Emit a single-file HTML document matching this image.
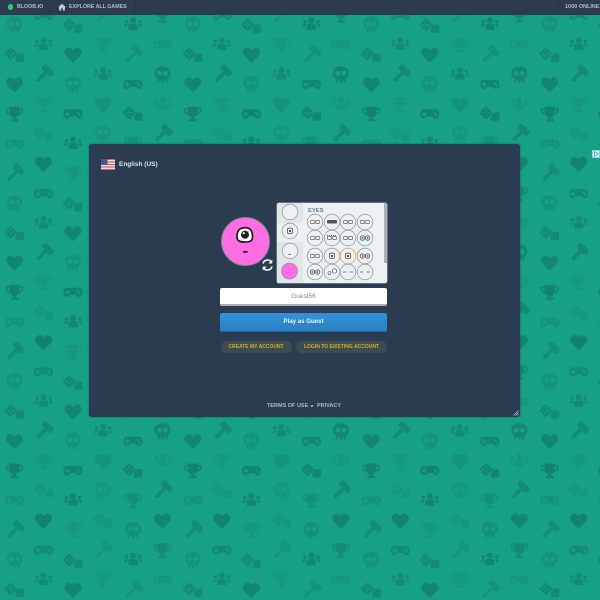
<!DOCTYPE html>
<html><head><meta charset="utf-8"><style>
*{box-sizing:border-box}
html,body{margin:0;padding:0;width:600px;height:600px;overflow:hidden;background:#16a085;font-family:"Liberation Sans",sans-serif}
.bg{position:absolute;left:0;top:0}
.abs{position:absolute}
.t{position:absolute;white-space:nowrap;font-weight:bold}
</style></head><body>
<svg class="bg" width="600" height="600">
<defs>
<g id="skull" transform="scale(.76)"><path fill-rule="evenodd" d="M0-11C-6.500-11-10.500-7-10.500-2C-10.500 1.500-9 3.500-6.500 5V10.500H-4.200V7.500H-1.500V10.500H1.500V7.500H4.200V10.500H6.500V5C9 3.500 10.500 1.500 10.500-2C10.500-7 6.500-11 0-11ZM-4-5A3.200 3.200 0 1 1-4 1.400A3.200 3.200 0 1 1-4-5ZM4-5A3.200 3.200 0 1 1 4 1.400A3.200 3.200 0 1 1 4-5Z"/></g>
<g id="heart" transform="scale(.76)"><path d="M0 10.500L-9.500 1C-13-3-10.500-9.500-5.500-9.500C-3-9.500-1-8 0-6C1-8 3-9.500 5.500-9.500C10.500-9.500 13-3 9.500 1Z"/></g>
<g id="trophy" transform="scale(.7)"><path fill-rule="evenodd" d="M-7.500-10.500H7.500V-8.500H12.500V-5C12.500-1.500 9.500 1 6 1.500C5 3.500 3.500 4.500 1.800 5V7.500H5.500V10.500H-5.500V7.500H-1.800V5C-3.500 4.500-5 3.500-6 1.500C-9.500 1-12.500-1.500-12.500-5V-8.500H-7.500ZM-10.500-6.500V-5C-10.500-3-9-1.500-7-1L-7.500-6.500ZM10.500-6.500H7.500L7-1C9-1.500 10.500-3 10.500-5Z"/></g>
<g id="gamepad" transform="scale(.66)"><path fill-rule="evenodd" d="M-9-7H9C13-7 14.500-3.500 14.500 0C14.500 3.500 13 7 9 7C6.500 7 5.500 4.500 4 3.500H-4C-5.500 4.500-6.500 7-9 7C-13 7-14.500 3.500-14.500 0C-14.500-3.500-13-7-9-7ZM-9.500-3.600V-1.200H-11.900V1.200H-9.500V3.600H-7.300V1.200H-4.900V-1.200H-7.300V-3.600ZM7.500-3.500A1.700 1.700 0 1 0 7.500-.1A1.700 1.700 0 1 0 7.500-3.500ZM10 0A1.700 1.700 0 1 0 10 3.400A1.700 1.700 0 1 0 10 0Z"/></g>
<g id="dice" transform="scale(.62)"><path fill-rule="evenodd" d="M-6.500-12L2.500-3.500C3.300-2.700 3.300-1.300 2.500-.5L-5.500 7.500C-6.300 8.300-7.700 8.300-8.500 7.500L-16.500-.5C-17.300-1.300-17.300-2.700-16.500-3.500L-8.500-11.500C-8-12-7-12.500-6.500-12ZM-7-8.500A1.400 1.400 0 1 0-7-5.700A1.400 1.400 0 1 0-7-8.500ZM-11.500-3.500A1.400 1.400 0 1 0-11.500-.7A1.400 1.400 0 1 0-11.500-3.500ZM-7-3.500A1.400 1.400 0 1 0-7-.7A1.400 1.400 0 1 0-7-3.500ZM-2.500-3.500A1.400 1.400 0 1 0-2.500-.7A1.400 1.400 0 1 0-2.500-3.500ZM-7 1A1.400 1.400 0 1 0-7 3.800A1.400 1.400 0 1 0-7 1Z"/><path d="M5-2.500H12.500C13.500-2.500 14.500-1.500 14.500-.5V9C14.500 10 13.500 11 12.500 11H3C2 11 1 10 1 9V3.500Z"/></g>
<g id="hammer" transform="scale(.66) rotate(45)"><rect x="-2.700" y="-6" width="5.400" height="20" rx="2.200"/><path d="M-8-14H8L10-11.500V-7L8-4.500H-8L-10-7V-11.500Z"/></g>
<g id="people" transform="scale(.66)"><circle cx="0" cy="-7" r="4.600"/><circle cx="-10" cy="-5" r="2.700"/><circle cx="10" cy="-5" r="2.700"/><path d="M-7 7.500V2C-7-.5-5-2-3-2H3C5-2 7-.5 7 2V7.500Z"/><path d="M-14 2.500C-14-.5-12-1.500-10-1.500L-8-1.500C-9-.5-9 1-9 2.500H-14ZM14 2.500C14-.5 12-1.500 10-1.500L8-1.500C9-.5 9 1 9 2.500H14Z"/></g>
<pattern id="p" x="0" y="10" width="178.4" height="178.4" patternUnits="userSpaceOnUse">
<g fill="#000" opacity=".8">
<use href="#skull" transform="translate(14.500 15)" opacity=".1"/>
<use href="#dice" transform="translate(15 45)" opacity=".17"/>
<use href="#heart" transform="translate(14.500 74.500)" opacity=".2"/>
<use href="#trophy" transform="translate(14.500 104)" opacity=".22"/>
<use href="#gamepad" transform="translate(14.500 134)" opacity=".1"/>
<use href="#hammer" transform="translate(14.500 163.700)" opacity=".14"/>
<use href="#people" transform="translate(43.500 35)" opacity=".16"/>
<use href="#hammer" transform="translate(43.500 64.700)" opacity=".17"/>
<use href="#trophy" transform="translate(43.500 94.500)" opacity=".06"/>
<use href="#dice" transform="translate(44 124)" opacity=".07"/>
<use href="#heart" transform="translate(43.500 154)" opacity=".22"/>
<use href="#gamepad" transform="translate(43.500 5.300)" opacity=".17"/>
<use href="#gamepad" transform="translate(43.500 183.700)" opacity=".17"/>
<use href="#dice" transform="translate(73.500 16)" opacity=".17"/>
<use href="#heart" transform="translate(73 45)" opacity=".2"/>
<use href="#skull" transform="translate(73 74.500)" opacity=".1"/>
<use href="#gamepad" transform="translate(73 104)" opacity=".22"/>
<use href="#people" transform="translate(73 134)" opacity=".2"/>
<use href="#trophy" transform="translate(73 163.700)" opacity=".08"/>
<use href="#trophy" transform="translate(103 35)" opacity=".06"/>
<use href="#people" transform="translate(103 64.700)" opacity=".16"/>
<use href="#heart" transform="translate(103 94.500)" opacity=".1"/>
<use href="#skull" transform="translate(103 124)" opacity=".08"/>
<use href="#dice" transform="translate(103.500 154)" opacity=".08"/>
<use href="#hammer" transform="translate(103 5.300)" opacity=".08"/>
<use href="#hammer" transform="translate(103 183.700)" opacity=".08"/>
<use href="#people" transform="translate(133 15)" opacity=".2"/>
<use href="#hammer" transform="translate(133 45)" opacity=".1"/>
<use href="#gamepad" transform="translate(133 74.500)" opacity=".2"/>
<use href="#dice" transform="translate(133.500 104)" opacity=".2"/>
<use href="#trophy" transform="translate(133 134)" opacity=".12"/>
<use href="#skull" transform="translate(133 163.700)" opacity=".12"/>
<use href="#gamepad" transform="translate(162.500 35)" opacity=".07"/>
<use href="#skull" transform="translate(162.500 64.700)" opacity=".2"/>
<use href="#people" transform="translate(162.500 94.500)" opacity=".07"/>
<use href="#hammer" transform="translate(162.500 124)" opacity=".16"/>
<use href="#heart" transform="translate(162.500 154)" opacity=".2"/>
<use href="#trophy" transform="translate(162.500 5.300)" opacity=".16"/>
<use href="#trophy" transform="translate(162.500 183.700)" opacity=".16"/>
</g>
</pattern>
</defs>
<rect width="600" height="600" fill="#16a085"/>
<rect width="600" height="600" fill="url(#p)"/>
</svg>

<!-- top bar -->
<div class="abs" style="left:0;top:0;width:600px;height:15px;background:#2c3b50"></div>
<div class="abs" style="left:50px;top:0;width:1px;height:15px;background:#283648"></div>
<div class="abs" style="left:135px;top:0;width:1px;height:15px;background:#283648"></div>
<div class="abs" style="left:558px;top:0;width:1px;height:15px;background:#283648"></div>
<div class="abs" style="left:7.500px;top:4px;width:5px;height:5.500px;border-radius:50%;background:#2ecc71"></div>
<div class="t" style="left:17px;top:3px;font-size:5.300px;line-height:8px;color:#b4bcc6">BLOOB.IO</div>
<svg class="abs" style="left:58px;top:3px" width="8" height="8" viewBox="0 0 8 8"><path d="M4 .8L8 4.200H6.900V7.500H4.800V5.300H3.200V7.500H1.100V4.200H0Z" fill="#c2c8d0"/></svg>
<div class="t" style="left:69px;top:3px;font-size:5.300px;line-height:8px;color:#b4bcc6">EXPLORE ALL GAMES</div>
<div class="t" style="left:565px;top:3px;font-size:5.500px;line-height:8px;color:#b4bcc6">1000 ONLINE</div>

<!-- ad marker -->
<div class="abs" style="left:592px;top:150px;width:8px;height:8px;background:#f4fdff;border:1px solid #7fd5e6"></div>
<svg class="abs" style="left:594px;top:151px" width="6" height="6" viewBox="0 0 6 6"><path d="M.5.500L4.500 3L.5 5.500Z" fill="none" stroke="#38b4d2" stroke-width=".9"/></svg>

<!-- panel -->
<div class="abs" style="left:88.500px;top:144px;width:431px;height:272.500px;background:#2c3c50;border-radius:3px;box-shadow:0 0 2px rgba(0,0,0,.35)"></div>
<svg class="abs" style="left:513px;top:410px" width="6" height="6" viewBox="0 0 6 6"><path d="M5.500 .5L.5 5.500M5.500 2.500L2.500 5.500M5.500 4.500L4.500 5.500" stroke="#aab4bd" stroke-width=".8"/></svg>

<!-- flag -->
<svg class="abs" style="left:101px;top:159px" width="14" height="11" viewBox="0 0 14 11">
<rect width="14" height="11" fill="#f2e6e8"/>
<rect y="0" width="14" height="1.100" fill="#c9616a"/><rect y="2.400" width="14" height="1.200" fill="#c9616a"/><rect y="4.900" width="14" height="1.200" fill="#c9616a"/><rect y="7.400" width="14" height="1.200" fill="#c9616a"/><rect y="9.900" width="14" height="1.100" fill="#c9616a"/>
<rect width="6.500" height="5.800" fill="#46588e"/></svg>
<div class="t" style="left:119px;top:160.500px;font-size:6.500px;line-height:8px;color:#dfe3e8">English (US)</div>

<!-- avatar -->
<svg class="abs" style="left:220px;top:216px" width="54" height="60" viewBox="0 0 54 60">
<circle cx="25.500" cy="25.500" r="24" fill="#ff6de2" stroke="#7b8790" stroke-width="1"/>
<path d="M17 21C17 14 20 11.700 25 11.700C30 11.700 32.500 14 32.500 21C32.500 25 30 26 25 26C20 26 17 25 17 21Z" fill="#fff" stroke="#111" stroke-width="1.600"/>
<circle cx="25" cy="18.700" r="4" fill="#1f1f1f"/><circle cx="23.700" cy="17.200" r="1.100" fill="#fff"/>
<rect x="23" y="35" width="4.500" height="1.700" fill="#222"/>
<g fill="none" stroke="#f1f4f5" stroke-width="1.600"><path d="M43 47.500A4.800 4.800 0 0 1 51.500 46"/><path d="M52 50.500A4.800 4.800 0 0 1 43.500 52"/></g>
<path d="M52.300 43.500V47.500H48.300ZM42.700 54.500V50.500H46.700Z" fill="#f1f4f5"/>
</svg>

<!-- picker -->
<div class="abs" style="left:277px;top:202.500px;width:110px;height:80px;background:#edf0f1;border-radius:2px;overflow:hidden;box-shadow:0 0 0 .5px #9aa5ad">
<div class="abs" style="left:0;top:0;width:26px;height:20px;background:#e1e5e7"></div>
<div class="abs" style="left:0;top:39px;width:26px;height:41px;background:#e1e5e7"></div>
<div class="abs" style="left:107px;top:0;width:3px;height:60px;background:#aab2b8"></div>
</div>
<svg class="abs" style="left:277px;top:202px" width="110" height="81" viewBox="277 202 110 81">
<defs>
<g id="c"><circle r="7.800" fill="#edf0f1" stroke="#8a9dae" stroke-width=".8"/></g>
<g id="e1" opacity=".85"><rect x="-4.500" y="-1.500" width="4" height="3" rx="1" fill="#fff" stroke="#444" stroke-width=".7"/><rect x=".5" y="-1.500" width="4" height="3" rx="1" fill="#fff" stroke="#444" stroke-width=".7"/></g>
<g id="e2" opacity=".85"><circle cx="-2.600" r="2.200" fill="#fff" stroke="#333" stroke-width=".8"/><circle cx="2.600" r="2.200" fill="#fff" stroke="#333" stroke-width=".8"/><circle cx="-2.600" r=".9" fill="#333"/><circle cx="2.600" r=".9" fill="#333"/></g>
<g id="e3" opacity=".85"><path d="M-2.500-2.500C-1-3 1-3 2.500-2.500V2C1 2.500-1 2.500-2.500 2Z" fill="#fff" stroke="#333" stroke-width=".8"/><circle r="1.200" fill="#333"/></g>
</defs>
<use href="#c" x="290" y="212"/>
<use href="#c" x="290" y="231"/><use href="#e3" x="290" y="231"/>
<use href="#c" x="290" y="251"/><rect x="288.500" y="254" width="2" height=".8" fill="#333"/>
<circle cx="289.500" cy="271" r="8" fill="#ff6de2" stroke="#8a9dae" stroke-width=".8"/>

<use href="#c" x="315" y="222"/><use href="#e1" x="315" y="222"/>
<use href="#c" x="332" y="222"/><rect x="327" y="220" width="10" height="3.500" rx="1" fill="#555"/>
<use href="#c" x="348" y="222"/><use href="#e1" x="348" y="222"/>
<use href="#c" x="365" y="222"/><use href="#e1" x="365" y="222"/>

<use href="#c" x="315" y="238"/><use href="#e1" x="315" y="238"/>
<use href="#c" x="332" y="238"/><use href="#e1" x="332" y="238"/><path d="M327 235.500H337" stroke="#333" stroke-width=".8" stroke-dasharray="1 1"/>
<use href="#c" x="348" y="238"/><use href="#e1" x="348" y="238"/>
<use href="#c" x="365" y="238"/><use href="#e2" x="365" y="238"/>

<use href="#c" x="315" y="256"/><use href="#e1" x="315" y="256"/>
<use href="#c" x="332" y="256"/><use href="#e3" x="332" y="256"/>
<circle cx="348" cy="256" r="7.800" fill="#edf0f1" stroke="#e8a566" stroke-width=".9"/><use href="#e3" x="348" y="256"/>
<use href="#c" x="365" y="256"/><use href="#e2" x="365" y="256"/>

<use href="#c" x="315" y="272"/><use href="#e2" x="315" y="272"/>
<use href="#c" x="332" y="272"/><circle cx="329.500" cy="273" r="1.500" fill="#fff" stroke="#444" stroke-width=".6"/><circle cx="334.500" cy="271" r="2.200" fill="#fff" stroke="#444" stroke-width=".7"/>
<use href="#c" x="348" y="272"/><path d="M343 272H346.500M349.500 272H353" stroke="#666" stroke-width=".7"/>
<use href="#c" x="365" y="272"/><path d="M360 272H363.500M366.500 272H370" stroke="#666" stroke-width=".7"/>
</svg>
<div class="t" style="left:308px;top:206.500px;font-size:5.800px;line-height:8px;color:#5f7d9b">EYES</div>

<!-- input -->
<div class="abs" style="left:220px;top:288px;width:167px;height:18px;background:#fff;border-radius:2px;border-bottom:2px solid #aab0b6;text-align:center;font-size:6.500px;line-height:17px;color:#7e8791">Guest56</div>
<!-- play -->
<div class="abs" style="left:220px;top:313px;width:167px;height:19px;background:linear-gradient(#3193da,#2b7fc0);border-radius:2px;border-bottom:1.500px solid #1f6aa5;text-align:center;font-size:6.100px;line-height:18px;color:#eef5fa;font-weight:bold">Play as Guest</div>
<!-- pills -->
<div class="abs" style="left:220.500px;top:341px;width:71px;height:12px;background:#3e4b50;border-radius:6px;text-align:center;font-size:5px;line-height:12px;color:#cdb41f;font-weight:bold">CREATE MY ACCOUNT</div>
<div class="abs" style="left:296px;top:341px;width:91px;height:12px;background:#3e4b50;border-radius:6px;text-align:center;font-size:5px;line-height:12px;color:#cdb41f;font-weight:bold">LOGIN TO EXISTING ACCOUNT</div>
<!-- footer -->
<div class="t" style="left:267px;top:401.500px;font-size:5.500px;line-height:8px;color:#aeb7c3">TERMS OF USE</div>
<div class="abs" style="left:311px;top:405px;width:2px;height:2px;border-radius:50%;background:#c3cad3"></div>
<div class="t" style="left:317px;top:401.500px;font-size:5.500px;line-height:8px;color:#aeb7c3">PRIVACY</div>
</body></html>
